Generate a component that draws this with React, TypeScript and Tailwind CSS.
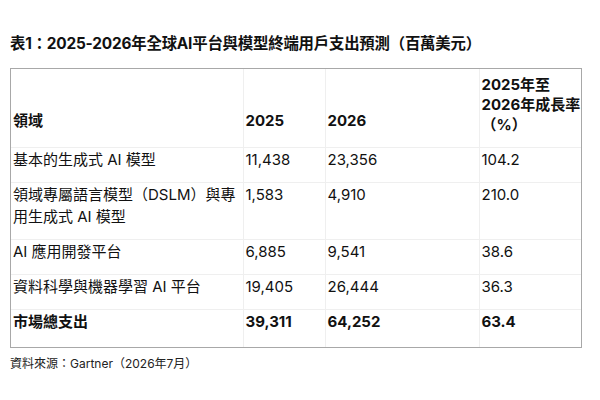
const rows = [
  { name: ['基本的生成式 AI 模型'], a: '11,438', b: '23,356', g: '104.2' },
  { name: ['領域專屬語言模型（DSLM）與專', '用生成式 AI 模型'], a: '1,583', b: '4,910', g: '210.0' },
  { name: ['AI 應用開發平台'], a: '6,885', b: '9,541', g: '38.6' },
  { name: ['資料科學與機器學習 AI 平台'], a: '19,405', b: '26,444', g: '36.3' },
];

const cell = 'border-l border-[#efefef] first:border-l-0 align-top pl-[2px] pr-1 pt-[1px] pb-[11px] leading-[22px]';
const totalCell = 'border-l border-[#efefef] first:border-l-0 align-top pl-[2px] pr-1 pt-[1px] pb-[14px] leading-[22px]';
const head = 'border-l border-[#efefef] first:border-l-0 align-bottom text-left pl-[2px] leading-[20px] font-bold';

export default function App() {
  return (
    <div className="w-[600px] h-[400px] bg-white text-[#111] font-['Inter','Noto_Sans_CJK_TC',sans-serif] pl-[10px] pt-[33px]">
      <h1 className="text-[15.4px] font-bold leading-[22px] tracking-[-0.2px]">
        表1：2025-2026年全球AI平台與模型終端用戶支出預測（百萬美元）
      </h1>

      <div className="mt-[13px] w-[572px] border border-[#a8a8a8]">
        <table className="w-full table-fixed border-collapse text-[15px]">
          <colgroup>
            <col className="w-[232px]" />
            <col className="w-[82px]" />
            <col className="w-[154px]" />
            <col />
          </colgroup>
          <thead>
            <tr>
              <th className={`${head} h-[78px] pb-[16px]`}>領域</th>
              <th className={`${head} pb-[16px]`}>2025</th>
              <th className={`${head} pb-[16px]`}>2026</th>
              <th className={`${head} pb-[12px] whitespace-nowrap`}>
                2025年至
                <br />
                2026年成長率
                <br />
                （%）
              </th>
            </tr>
          </thead>
          <tbody>
            {rows.map((r) => (
              <tr key={r.a} className="border-t border-[#efefef]">
                <td className={cell}>
                  {r.name.map((line, i) => (
                    <div key={i} className="whitespace-nowrap">{line}</div>
                  ))}
                </td>
                <td className={cell}>{r.a}</td>
                <td className={cell}>{r.b}</td>
                <td className={cell}>{r.g}</td>
              </tr>
            ))}
            <tr className="border-t border-[#efefef] font-bold">
              <td className={totalCell}>市場總支出</td>
              <td className={totalCell}>39,311</td>
              <td className={totalCell}>64,252</td>
              <td className={totalCell}>63.4</td>
            </tr>
          </tbody>
        </table>
      </div>

      <p className="mt-[6px] text-[12px] leading-[20px] text-[#222]">資料來源：Gartner（2026年7月）</p>
    </div>
  );
}
